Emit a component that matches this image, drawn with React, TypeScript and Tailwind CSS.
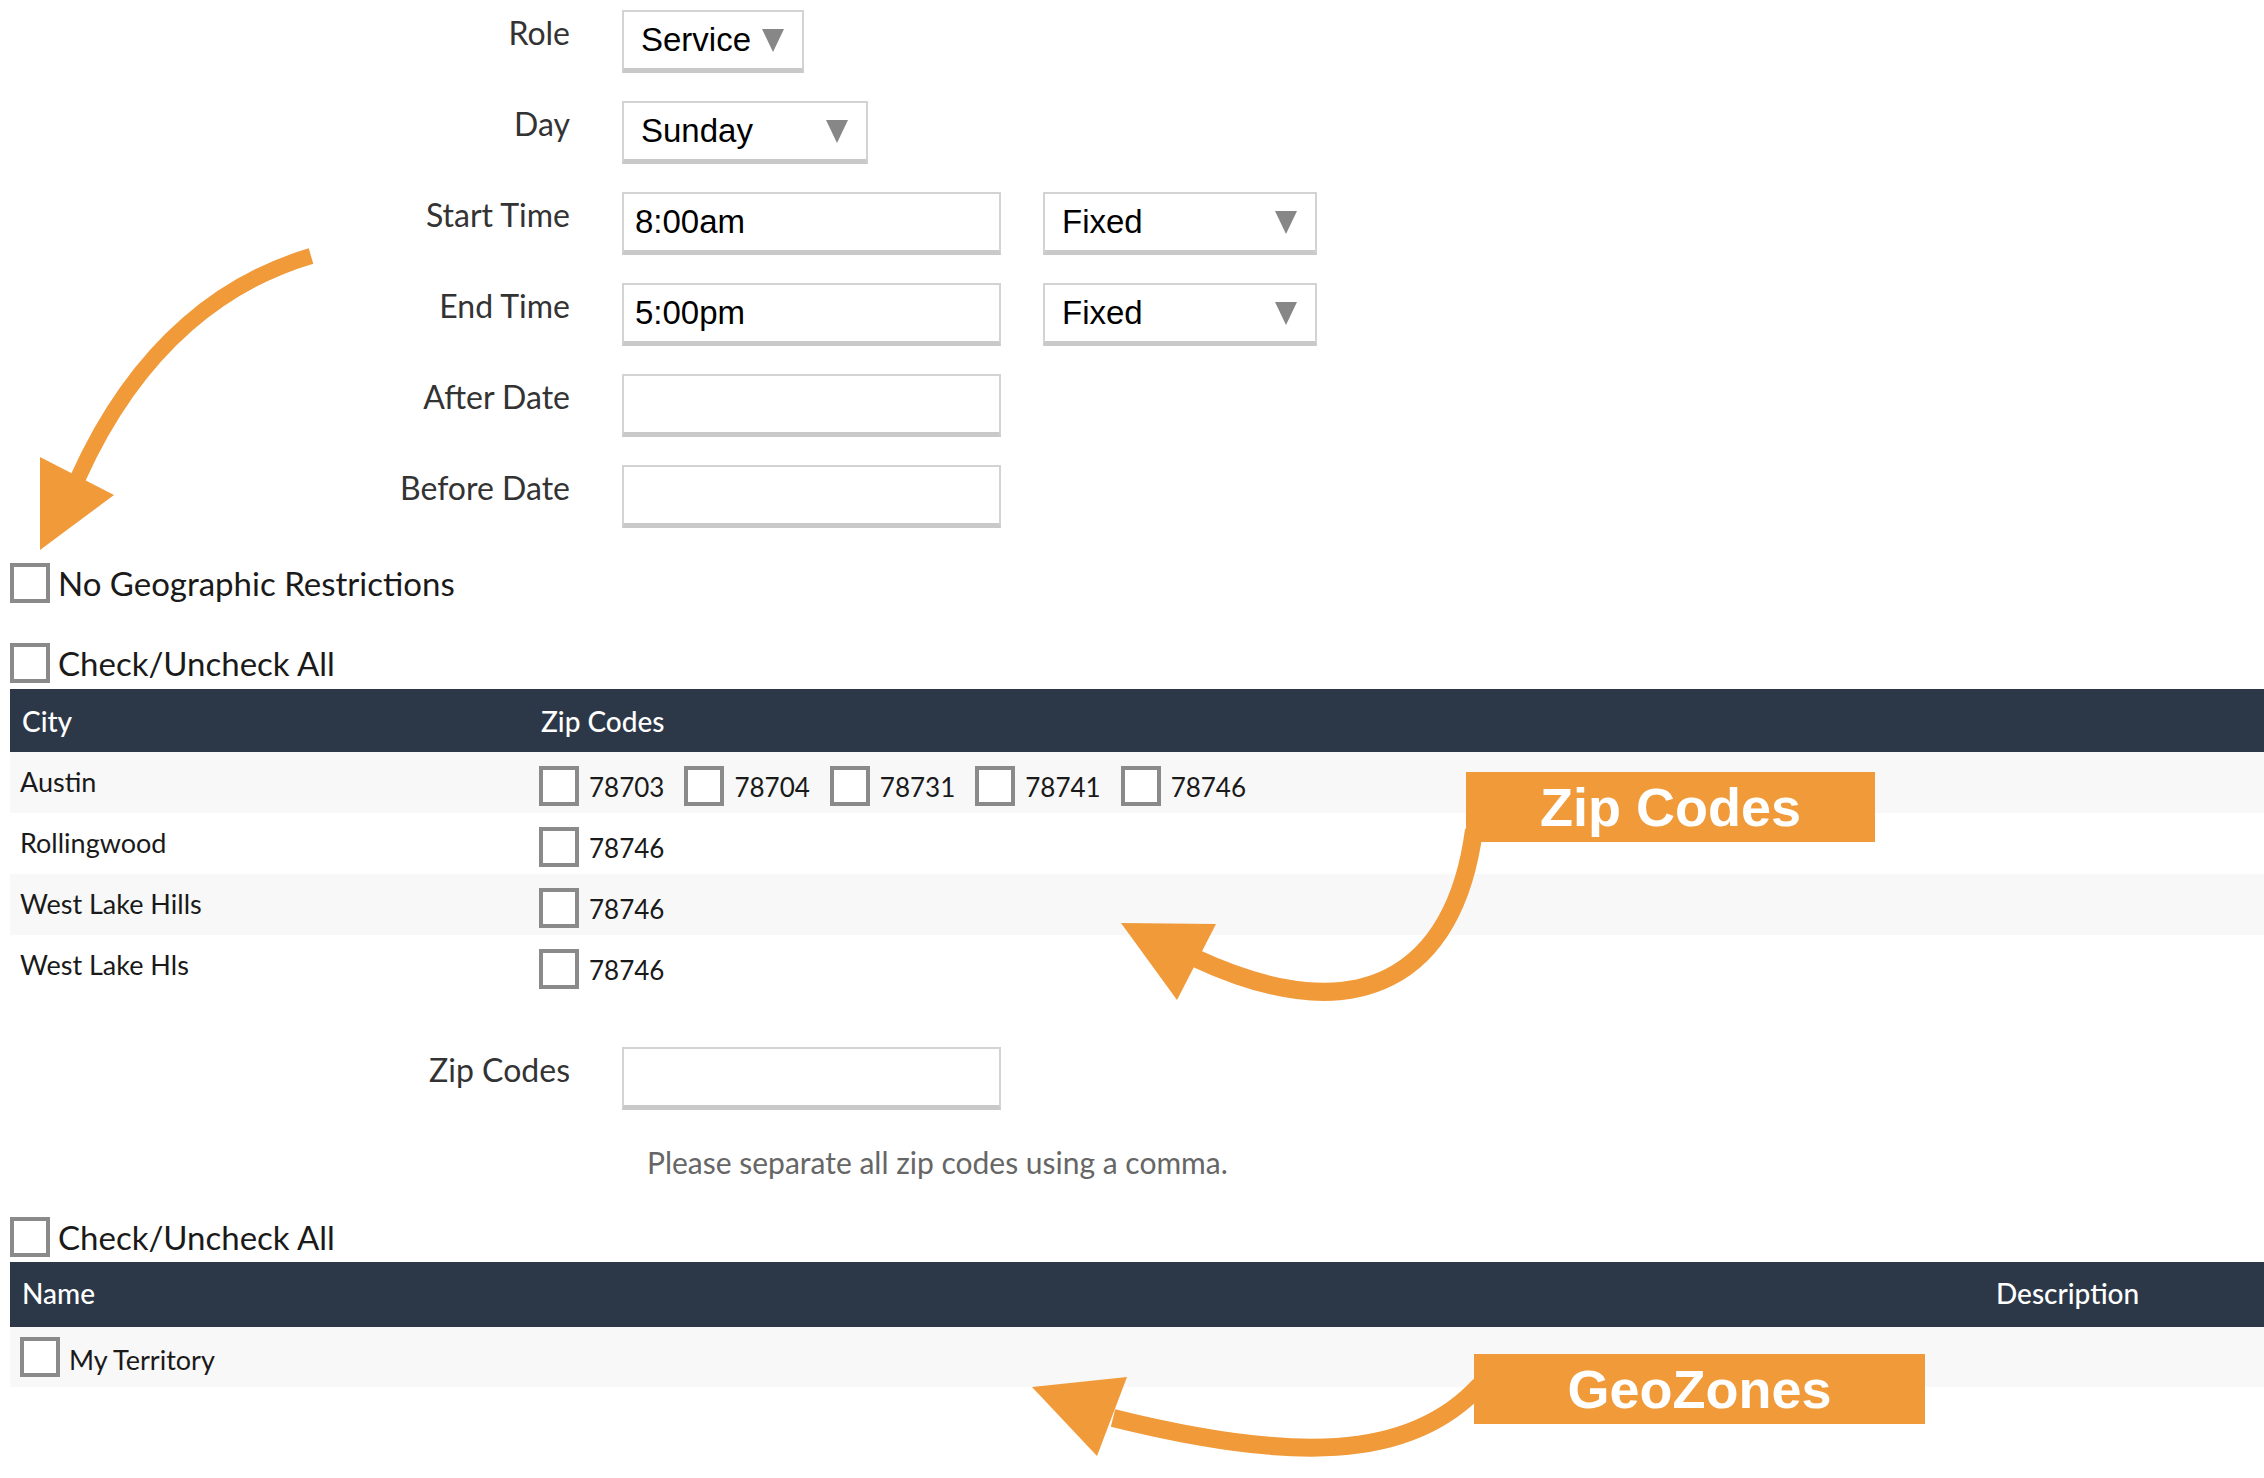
import type { ReactNode } from "react";

const zipRows = [
  { city: "Austin", zips: ["78703", "78704", "78731", "78741", "78746"], alt: true },
  { city: "Rollingwood", zips: ["78746"], alt: false },
  { city: "West Lake Hills", zips: ["78746"], alt: true },
  { city: "West Lake Hls", zips: ["78746"], alt: false },
];

function Caret() {
  return (
    <svg width="22" height="24" viewBox="0 0 22 24" className="shrink-0">
      <polygon points="0,1 22,1 11,24" fill="#878787" />
    </svg>
  );
}

function Select({ value, width }: { value: string; width: string }) {
  return (
    <div
      className={`${width} flex h-[63px] items-center justify-between border-x-2 border-t-2 border-b-[5px] border-[#d3d3d3] border-b-[#c9c9c9] bg-white pl-[17px] pr-[18px] font-['Liberation_Sans',Arial,sans-serif] text-[33px] text-black`}
    >
      <span>{value}</span>
      <Caret />
    </div>
  );
}

function Input({ value = "" }: { value?: string }) {
  return (
    <div className="flex h-[63px] w-[379px] items-center border-x-2 border-t-2 border-b-[5px] border-[#d3d3d3] border-b-[#c9c9c9] bg-white pl-[11px] font-['Liberation_Sans',Arial,sans-serif] text-[33px] text-black">
      {value}
    </div>
  );
}

function Box() {
  return <div className="h-[40px] w-[40px] shrink-0 border-4 border-[#8a8a8a] bg-white" />;
}

function FormRow({ label, children }: { label: string; children: ReactNode }) {
  return (
    <div className="flex items-start gap-[52px]">
      <div className="w-[560px] pt-[4px] text-right text-[32px] leading-[38px] text-[#333]">{label}</div>
      <div className="flex gap-[42px]">{children}</div>
    </div>
  );
}

function CheckLine({ label }: { label: string }) {
  return (
    <div className="flex items-center gap-[8px]">
      <Box />
      <span className="text-[33px] leading-[40px] text-[#1a1a1a]">{label}</span>
    </div>
  );
}

export default function App() {
  return (
    <div className="relative min-h-[1478px] w-full overflow-hidden bg-white font-['Lato','Noto_Sans',sans-serif]">
      <div className="pl-[10px] pt-[10px]">
        <div className="flex flex-col gap-[28px]">
          <FormRow label="Role">
            <Select value="Service" width="w-[182px]" />
          </FormRow>
          <FormRow label="Day">
            <Select value="Sunday" width="w-[246px]" />
          </FormRow>
          <FormRow label="Start Time">
            <Input value="8:00am" />
            <Select value="Fixed" width="w-[274px]" />
          </FormRow>
          <FormRow label="End Time">
            <Input value="5:00pm" />
            <Select value="Fixed" width="w-[274px]" />
          </FormRow>
          <FormRow label="After Date">
            <Input />
          </FormRow>
          <FormRow label="Before Date">
            <Input />
          </FormRow>
        </div>

        <div className="mt-[35px]">
          <CheckLine label="No Geographic Restrictions" />
        </div>
        <div className="mt-[40px]">
          <CheckLine label="Check/Uncheck All" />
        </div>

        <div className="mt-[6px]">
          <div className="grid h-[63px] grid-cols-[529px_1fr] items-center bg-[#2c3847] text-[28px] font-medium text-white">
            <div className="pl-[12px]">City</div>
            <div className="pl-[2px]">Zip Codes</div>
          </div>
          {zipRows.map((r) => (
            <div
              key={r.city}
              className={`grid h-[61px] grid-cols-[529px_1fr] items-center text-[27px] text-[#1a1a1a] ${r.alt ? "bg-[#f8f8f8]" : "bg-white"}`}
            >
              <div className="pl-[10px]">{r.city}</div>
              <div className="flex items-center gap-[20px] pt-[6px]">
                {r.zips.map((z) => (
                  <div key={z} className="flex items-center gap-[10px]">
                    <Box />
                    <span className="pt-[4px] text-[26px]">{z}</span>
                  </div>
                ))}
              </div>
            </div>
          ))}
        </div>

        <div className="mt-[51px]">
          <FormRow label="Zip Codes">
            <Input />
          </FormRow>
        </div>

        <p className="ml-[637px] mt-[35px] text-[30px] leading-[34px] text-[#666]">
          Please separate all zip codes using a comma.
        </p>

        <div className="mt-[38px]">
          <CheckLine label="Check/Uncheck All" />
        </div>

        <div className="mt-[5px]">
          <div className="grid h-[65px] grid-cols-[1986px_1fr] items-center bg-[#2c3847] pb-[4px] text-[28px] font-medium text-white">
            <div className="pl-[12px]">Name</div>
            <div>Description</div>
          </div>
          <div className="grid h-[60px] grid-cols-[1986px_1fr] items-center bg-[#f8f8f8] text-[27px] text-[#1a1a1a]">
            <div className="flex items-center gap-[9px] pl-[10px]">
              <Box />
              <span className="pt-[6px]">My Territory</span>
            </div>
            <div />
          </div>
        </div>
      </div>

      {/* annotation arrows */}
      <svg
        className="pointer-events-none absolute left-0 top-0"
        width="2264"
        height="1478"
        viewBox="0 0 2264 1478"
      >
        <g fill="none" stroke="#f09a3a" strokeWidth="16">
          <path d="M311 256 C230 280 140 340 78 478" />
          <path d="M1474 830 C1455 975 1360 1035 1195 958" strokeWidth="18" />
          <path d="M1480 1385 C1410 1462 1290 1462 1113 1418" strokeWidth="18" />
        </g>
        <g fill="#f09a3a">
          <polygon points="40,457 114,495 40,550" />
          <polygon points="1121,923 1216,924 1177,1000" />
          <polygon points="1032,1387 1127,1377 1097,1456" />
        </g>
      </svg>

      <div className="absolute left-[1466px] top-[772px] flex h-[70px] w-[409px] items-center justify-center bg-[#f09a3a] font-['Liberation_Sans',Arial,sans-serif] text-[54px] font-bold text-white">
        Zip Codes
      </div>
      <div className="absolute left-[1474px] top-[1354px] flex h-[70px] w-[451px] items-center justify-center bg-[#f09a3a] font-['Liberation_Sans',Arial,sans-serif] text-[54px] font-bold text-white">
        GeoZones
      </div>
    </div>
  );
}
